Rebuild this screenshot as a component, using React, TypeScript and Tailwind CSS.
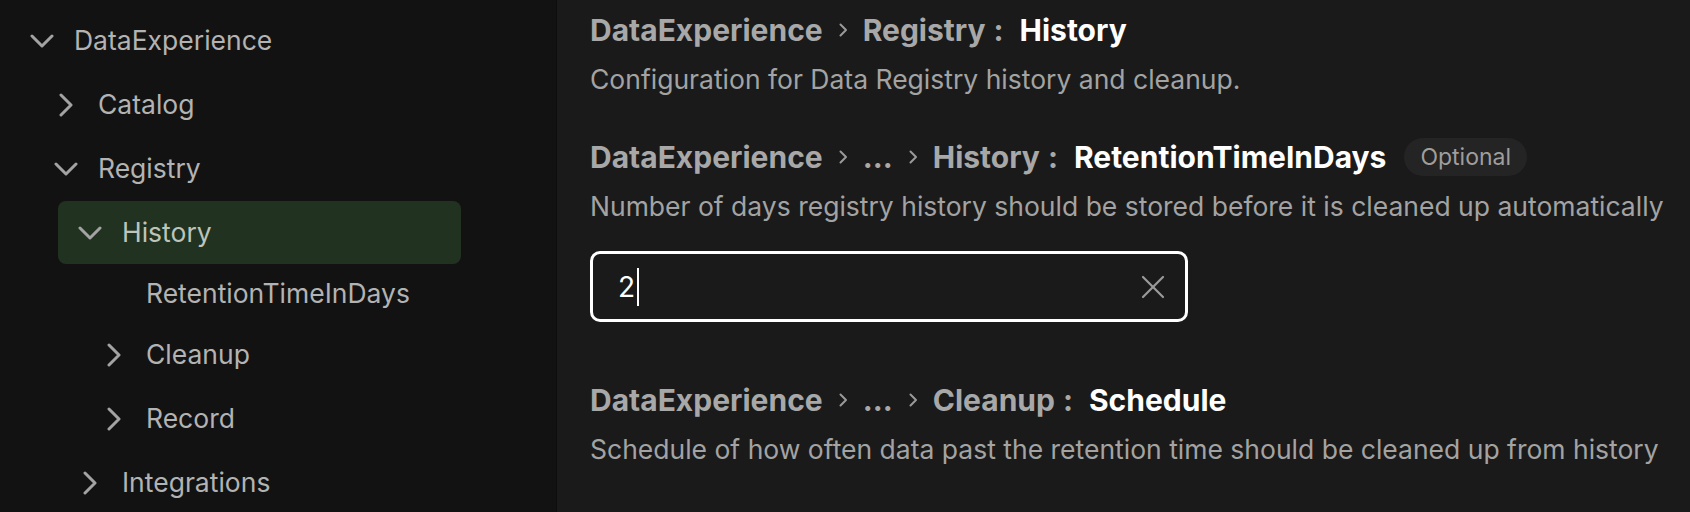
import React from 'react';

type Node = {
  label: string;
  level: number;
  kind: 'open' | 'closed' | 'leaf';
  active?: boolean;
};

const tree: Node[] = [
  { label: 'DataExperience', level: 0, kind: 'open' },
  { label: 'Catalog', level: 1, kind: 'closed' },
  { label: 'Registry', level: 1, kind: 'open' },
  { label: 'History', level: 2, kind: 'open', active: true },
  { label: 'RetentionTimeInDays', level: 3, kind: 'leaf' },
  { label: 'Cleanup', level: 3, kind: 'closed' },
  { label: 'Record', level: 3, kind: 'closed' },
  { label: 'Integrations', level: 2, kind: 'closed' },
];

const indent = ['pl-[30px]', 'pl-[54px]', 'pl-[78px]', 'pl-[102px]'];

function Chevron({ open }: { open: boolean }) {
  return (
    <svg width="24" height="24" viewBox="0 0 24 24" fill="none" stroke="currentColor" strokeWidth="3" strokeLinecap="round" strokeLinejoin="round" className="shrink-0 text-[#a3a3a3]">
      {open ? <polyline points="2,7 12,17 22,7" /> : <polyline points="7,2 17,12 7,22" />}
    </svg>
  );
}

function TreeRow({ node }: { node: Node }) {
  const height = node.kind === 'leaf' ? 'h-[58px]' : 'h-[64px]';
  const inner = (
    <>
      {node.kind === 'leaf' ? <span className="w-[24px] shrink-0" /> : <Chevron open={node.kind === 'open'} />}
      <span className={`ml-[20px] text-[26.5px] ${node.active ? 'text-[#bcc4bb]' : 'text-[#b3b3b3]'}`}>{node.label}</span>
    </>
  );

  if (node.active) {
    return (
      <div className={`${height} pl-[58px] flex`}>
        <div className="w-[403px] h-[63px] rounded-lg bg-[#213221] flex items-center pl-[20px]">{inner}</div>
      </div>
    );
  }

  return <div className={`${height} ${indent[node.level]} flex items-center`}>{inner}</div>;
}

function Sep() {
  return (
    <svg width="10" height="14" viewBox="0 0 10 14" fill="none" stroke="#9a9a9a" strokeWidth="2" strokeLinecap="round" strokeLinejoin="round" className="mx-[15px] shrink-0">
      <polyline points="2.5,1.5 8,7 2.5,12.5" />
    </svg>
  );
}

function Heading({ path, name, optional }: { path: string[]; name: string; optional?: boolean }) {
  return (
    <div className="flex items-center h-[40px] text-[30px] font-bold text-[#a8a8a8]">
      {path.map((p, i) => (
        <React.Fragment key={i}>
          {i > 0 && <Sep />}
          <span>{p}</span>
        </React.Fragment>
      ))}
      <span className="ml-[8px]">:</span>
      <span className="ml-[16px] text-white">{name}</span>
      {optional && (
        <span className="ml-[18px] h-[38px] px-[16px] rounded-full bg-[#242424] text-[23px] font-normal text-[#9e9e9e] flex items-center">
          Optional
        </span>
      )}
    </div>
  );
}

function Desc({ children }: { children: React.ReactNode }) {
  return <p className="mt-[12px] text-[26.5px] leading-[34px] text-[#a3a3a3] whitespace-nowrap">{children}</p>;
}

export default function App() {
  return (
    <div className="flex h-[512px] w-full overflow-hidden font-['Inter',sans-serif] bg-[#1a1a1a]">
      <aside className="w-[557px] shrink-0 bg-[#121212] border-r border-[#0d0d0d] pt-[9px]">
        {tree.map((n) => (
          <TreeRow key={n.label} node={n} />
        ))}
      </aside>

      <main className="flex-1 pl-[33px] pt-[10px]">
        <Heading path={['DataExperience', 'Registry']} name="History" />
        <Desc>Configuration for Data Registry history and cleanup.</Desc>

        <div className="mt-[41px]">
          <Heading path={['DataExperience', '...', 'History']} name="RetentionTimeInDays" optional />
          <Desc>Number of days registry history should be stored before it is cleaned up automatically</Desc>
        </div>

        <div className="mt-[28px] w-[598px] h-[71px] rounded-[10px] border-[3px] border-white flex items-center pl-[25px] pr-[20px]">
          <span className="text-[28px] text-white leading-none">2</span>
          <span className="ml-[2px] w-[2px] h-[38px] bg-white" />
          <svg width="24" height="24" viewBox="0 0 24 24" fill="none" stroke="#9a9a9a" strokeWidth="2.2" strokeLinecap="round" className="ml-auto">
            <line x1="2" y1="2" x2="22" y2="22" />
            <line x1="22" y1="2" x2="2" y2="22" />
          </svg>
        </div>

        <div className="mt-[58px]">
          <Heading path={['DataExperience', '...', 'Cleanup']} name="Schedule" />
          <Desc>Schedule of how often data past the retention time should be cleaned up from history</Desc>
        </div>
      </main>
    </div>
  );
}
